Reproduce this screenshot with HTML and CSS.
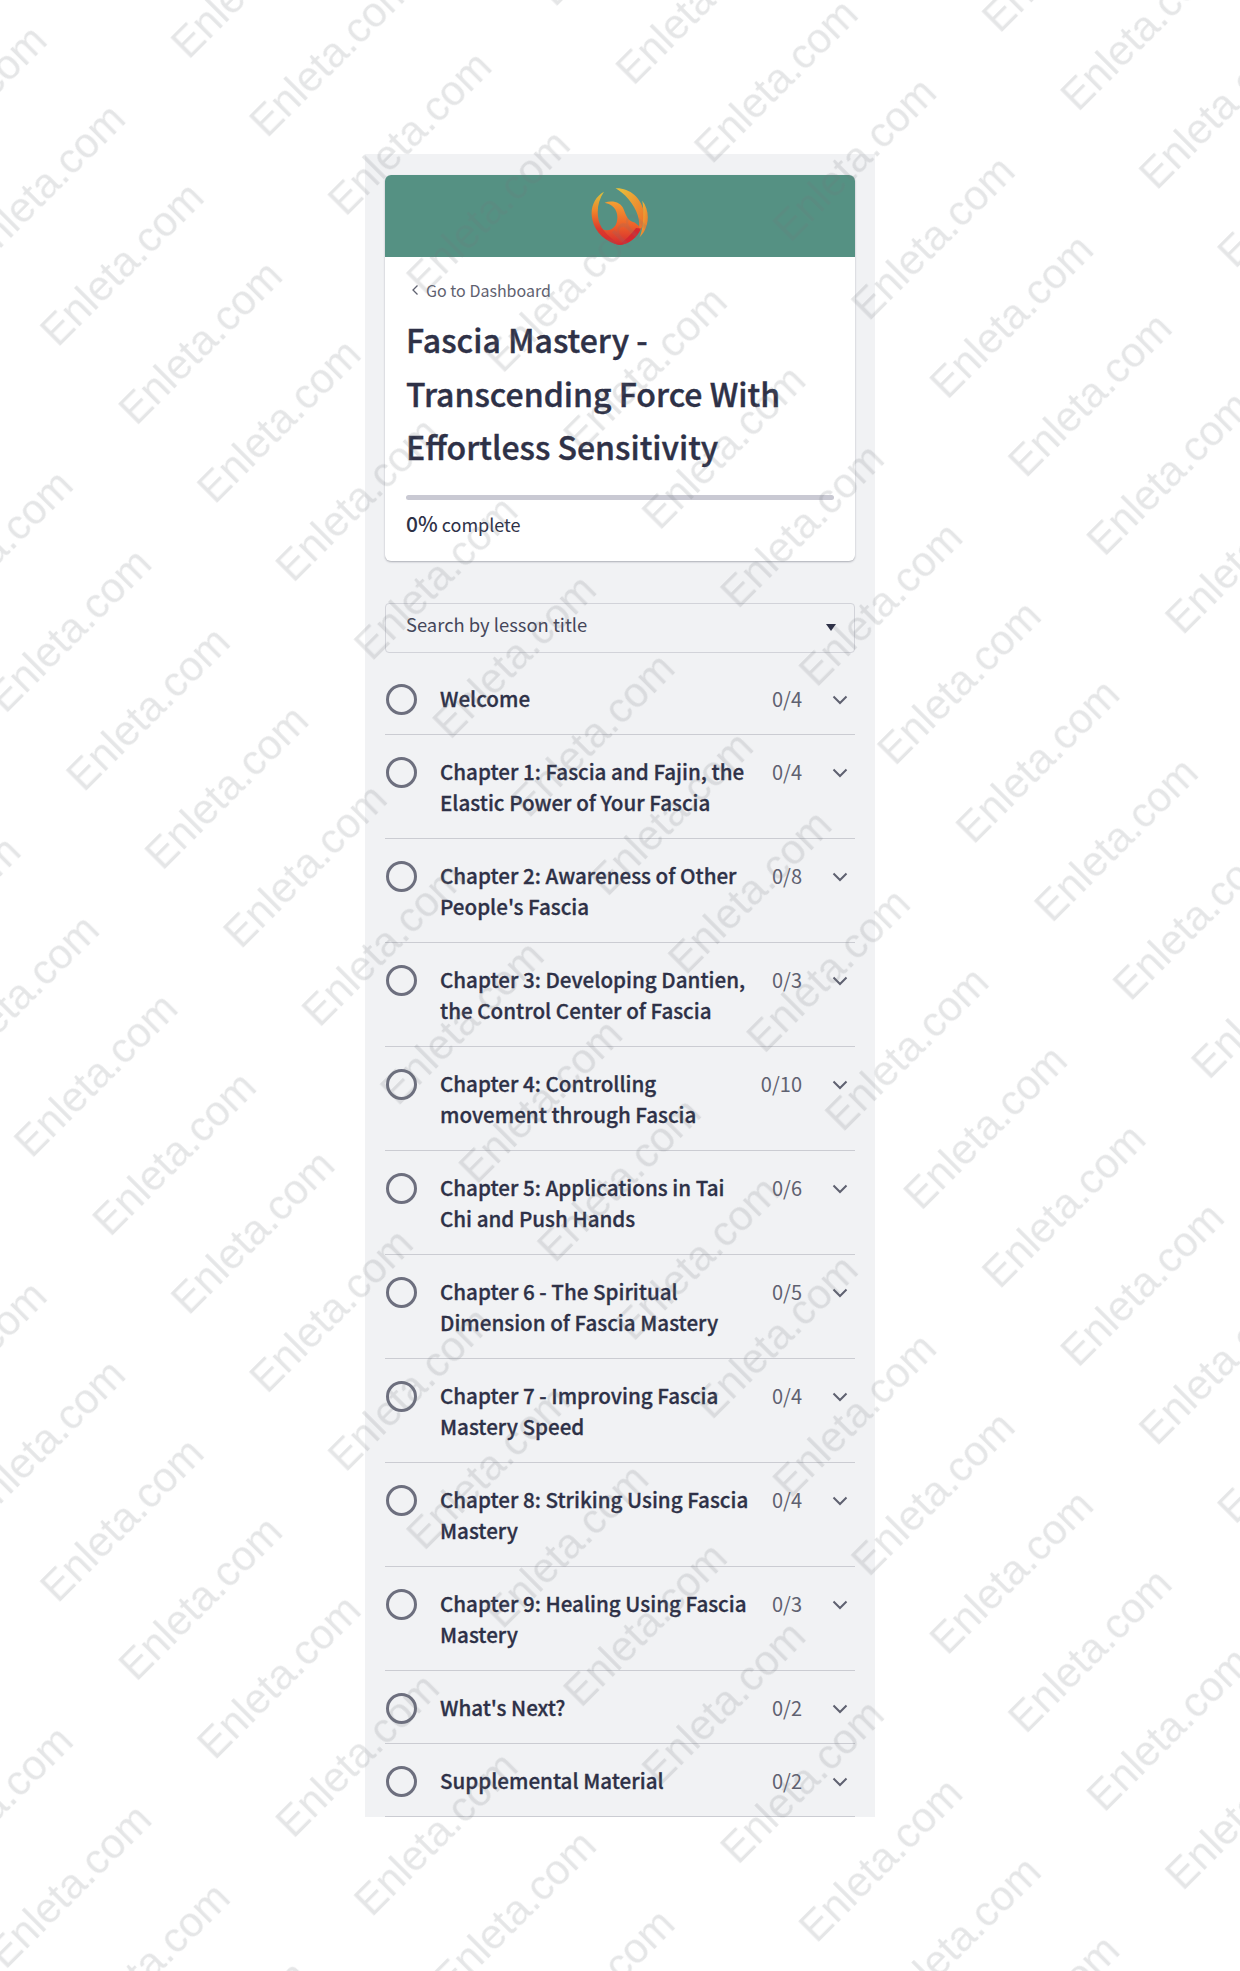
FILE: index.html
```html
<!DOCTYPE html>
<html lang="en">
<head>
    <meta charset="UTF-8">
    <meta name="viewport" content="width=device-width, initial-scale=1.0">
    <title>Fascia Mastery</title>
    <link rel="stylesheet" href="styles.css">
</head>
<body>
    <div class="page">
        <div class="panel">
            <!-- Course card -->
            <div class="card">
                <div class="card-header">
                    <svg class="logo" viewBox="0 0 170 170">
                        <defs>
                            <linearGradient id="fireA" x1="0" y1="0" x2="0" y2="1">
                                <stop offset="0" stop-color="#d9c23e"/>
                                <stop offset="0.35" stop-color="#f0862a"/>
                                <stop offset="0.7" stop-color="#dd3a2c"/>
                                <stop offset="1" stop-color="#d22a2e"/>
                            </linearGradient>
                            <linearGradient id="fireB" x1="0" y1="0" x2="1" y2="1">
                                <stop offset="0" stop-color="#e9c43c"/>
                                <stop offset="1" stop-color="#ee6a28"/>
                            </linearGradient>
                            <linearGradient id="fireC" x1="0" y1="0" x2="0" y2="1">
                                <stop offset="0" stop-color="#f3a033"/>
                                <stop offset="0.55" stop-color="#ee6029"/>
                                <stop offset="1" stop-color="#d22a30"/>
                            </linearGradient>
                        </defs>
                        <path fill="url(#fireC)" d="M26 118c14 14 36 10 46-6 10-20 6-46-12-58-6-4-14-6-20-8 22-8 48-2 56 20 8 20 12 34 32 38l17 14c-5 27-35 52-60 52-25-2-47-22-59-52z"/>
                        <path fill="url(#fireA)" d="M38 14C10 30-4 62 4 96c8 38 40 66 80 74-24-20-54-40-62-74-6-30 0-58 16-82z"/>
                        <path fill="url(#fireB)" d="M72 4c38-2 78 26 84 76 2 20-4 38-16 52 6-32-4-66-30-96C98 22 86 12 72 4z"/>
                        <path fill="url(#fireB)" d="M150 40c20 24 22 62 5 92-4 6-8 11-13 16 12-24 14-80 8-108z"/>
                        <path fill="#d5272f" d="M146 122c-8 26-38 46-62 48 14-14 34-30 48-50z"/>
                    </svg>
                </div>
                <div class="card-body">
                    <a class="back-link" href="#">
                        <svg class="back-icon" viewBox="0 0 8 12"><path d="M6.5 1.5 2 6l4.5 4.5"/></svg>
                        <span>Go to Dashboard</span>
                    </a>
                    <h1 class="course-title">Fascia Mastery - Transcending Force With Effortless Sensitivity</h1>
                    <div class="progress-track"></div>
                    <div class="progress-label"><span class="progress-value">0%</span> complete</div>
                </div>
            </div>

            <!-- Lesson search -->
            <div class="search-box">
                <span class="search-label">Search by lesson title</span>
                <span class="caret"></span>
            </div>

            <!-- Chapter list -->
            <ul class="chapter-list">
                <li class="chapter">
                    <span class="status"></span>
                    <span class="chapter-title">Welcome</span>
                    <span class="chapter-count">0/4</span>
                    <svg class="chevron" viewBox="0 0 16 10"><path d="M1.5 1.5 8 8l6.500-6.500"/></svg>
                </li>
                <li class="chapter">
                    <span class="status"></span>
                    <span class="chapter-title">Chapter 1: Fascia and Fajin, the Elastic Power of Your Fascia</span>
                    <span class="chapter-count">0/4</span>
                    <svg class="chevron" viewBox="0 0 16 10"><path d="M1.5 1.5 8 8l6.500-6.500"/></svg>
                </li>
                <li class="chapter">
                    <span class="status"></span>
                    <span class="chapter-title">Chapter 2: Awareness of Other People's Fascia</span>
                    <span class="chapter-count">0/8</span>
                    <svg class="chevron" viewBox="0 0 16 10"><path d="M1.5 1.5 8 8l6.500-6.500"/></svg>
                </li>
                <li class="chapter">
                    <span class="status"></span>
                    <span class="chapter-title">Chapter 3: Developing Dantien, the Control Center of Fascia</span>
                    <span class="chapter-count">0/3</span>
                    <svg class="chevron" viewBox="0 0 16 10"><path d="M1.5 1.5 8 8l6.500-6.500"/></svg>
                </li>
                <li class="chapter">
                    <span class="status"></span>
                    <span class="chapter-title">Chapter 4: Controlling movement through Fascia</span>
                    <span class="chapter-count">0/10</span>
                    <svg class="chevron" viewBox="0 0 16 10"><path d="M1.5 1.5 8 8l6.500-6.500"/></svg>
                </li>
                <li class="chapter">
                    <span class="status"></span>
                    <span class="chapter-title">Chapter 5: Applications in Tai Chi and Push Hands</span>
                    <span class="chapter-count">0/6</span>
                    <svg class="chevron" viewBox="0 0 16 10"><path d="M1.5 1.5 8 8l6.500-6.500"/></svg>
                </li>
                <li class="chapter">
                    <span class="status"></span>
                    <span class="chapter-title">Chapter 6 - The Spiritual Dimension of Fascia Mastery</span>
                    <span class="chapter-count">0/5</span>
                    <svg class="chevron" viewBox="0 0 16 10"><path d="M1.5 1.5 8 8l6.500-6.500"/></svg>
                </li>
                <li class="chapter">
                    <span class="status"></span>
                    <span class="chapter-title">Chapter 7 - Improving Fascia Mastery Speed</span>
                    <span class="chapter-count">0/4</span>
                    <svg class="chevron" viewBox="0 0 16 10"><path d="M1.5 1.5 8 8l6.500-6.500"/></svg>
                </li>
                <li class="chapter">
                    <span class="status"></span>
                    <span class="chapter-title">Chapter 8: Striking Using Fascia Mastery</span>
                    <span class="chapter-count">0/4</span>
                    <svg class="chevron" viewBox="0 0 16 10"><path d="M1.5 1.5 8 8l6.500-6.500"/></svg>
                </li>
                <li class="chapter">
                    <span class="status"></span>
                    <span class="chapter-title">Chapter 9: Healing Using Fascia Mastery</span>
                    <span class="chapter-count">0/3</span>
                    <svg class="chevron" viewBox="0 0 16 10"><path d="M1.5 1.5 8 8l6.500-6.500"/></svg>
                </li>
                <li class="chapter">
                    <span class="status"></span>
                    <span class="chapter-title">What's Next?</span>
                    <span class="chapter-count">0/2</span>
                    <svg class="chevron" viewBox="0 0 16 10"><path d="M1.5 1.5 8 8l6.500-6.500"/></svg>
                </li>
                <li class="chapter">
                    <span class="status"></span>
                    <span class="chapter-title">Supplemental Material</span>
                    <span class="chapter-count">0/2</span>
                    <svg class="chevron" viewBox="0 0 16 10"><path d="M1.5 1.5 8 8l6.500-6.500"/></svg>
                </li>
            </ul>
        </div>
    </div>

    <!-- Watermark over the whole page -->
    <svg class="watermark" width="1240" height="1971">
        <defs>
            <pattern id="wm" width="296" height="111" patternUnits="userSpaceOnUse" patternTransform="rotate(-45) translate(85.600 5)">
                <text class="watermark-text" x="5" y="60">Enleta.com</text>
            </pattern>
        </defs>
        <rect width="1240" height="1971" fill="url(#wm)"/>
    </svg>
</body>
</html>
```

FILE: styles.css
```css
body {
    font-family: "Noto Sans CJK SC", "Source Sans Pro", "Open Sans", sans-serif;
    margin: 0;
    height: 1971px;
    background-color: #fff;
    color: #2e3147;
    overflow: hidden;
}
.page {
    display: flex;
    justify-content: center;
    padding-top: 154px;
}
.panel {
    width: 510px;
    box-sizing: border-box;
    padding: 21px 20px 0;
    background-color: #f1f2f4;
}
.card {
    background-color: #fff;
    border-radius: 6px;
    box-shadow: 0 1px 2px rgba(40, 42, 60, 0.35);
    overflow: hidden;
}
.card-header {
    display: flex;
    justify-content: center;
    align-items: center;
    height: 82px;
    background-color: #559183;
}
.logo {
    width: 58px;
    height: 58px;
}
.card-body {
    padding: 21px 21px 22px;
}
.back-link {
    display: flex;
    align-items: center;
    gap: 7px;
    padding-left: 5px;
    height: 24px;
    font-size: 16px;
    line-height: 24px;
    color: #5f6170;
    text-decoration: none;
}
.back-icon {
    width: 8px;
    height: 12px;
    fill: none;
    stroke: #5f6170;
    stroke-width: 1.3;
}
.course-title {
    margin: 11px 0 21px;
    font-size: 32px;
    line-height: 53.5px;
    font-weight: 500;
    -webkit-text-stroke: 0.4px #2e3147;
}
.progress-track {
    height: 5px;
    border-radius: 3px;
    background-color: #c9c9d3;
}
.progress-label {
    margin-top: 8px;
    font-size: 18px;
    line-height: 30px;
}
.progress-value {
    font-size: 21px;
    font-weight: 500;
}
.search-box {
    display: flex;
    justify-content: space-between;
    align-items: center;
    box-sizing: border-box;
    height: 50px;
    margin-top: 42px;
    padding: 0 18px 0 20px;
    border: 1px solid #d2d3d9;
    border-radius: 4px;
    font-size: 18.400px;
    color: #45475a;
}
.search-label {
    margin-bottom: 7px;
}
.caret {
    width: 0;
    height: 0;
    border-left: 5.5px solid transparent;
    border-right: 5.500px solid transparent;
    border-top: 7px solid #2e3147;
}
.chapter-list {
    list-style-type: none;
    margin: 0;
    padding: 9px 0 0;
}
.chapter {
    display: flex;
    align-items: flex-start;
    padding: 21px 8px 20px 1px;
    border-bottom: 1px solid #cbccd2;
}
.status {
    flex: none;
    width: 31px;
    height: 31px;
    box-sizing: border-box;
    margin: 1px 0 -1px;
    border: 3px solid #6d6f7e;
    border-radius: 50%;
}
.chapter-title {
    flex: none;
    width: 313px;
    margin-left: 23px;
    font-size: 20.600px;
    line-height: 31px;
    font-weight: 500;
    -webkit-text-stroke: 0.3px #2e3147;
}
.chapter-count {
    flex: none;
    width: 49px;
    text-align: right;
    font-size: 20px;
    line-height: 31px;
    color: #5f6170;
}
.chevron {
    flex: none;
    width: 16px;
    height: 10px;
    margin: 12px 0 0 30px;
    fill: none;
    stroke: #5f6170;
    stroke-width: 2;
}
.watermark {
    position: absolute;
    top: 0;
    left: 0;
    pointer-events: none;
}
.watermark-text {
    font-family: "Liberation Sans", Arial, sans-serif;
    font-size: 42px;
    fill: rgba(110, 115, 120, 0.18);
}
```
